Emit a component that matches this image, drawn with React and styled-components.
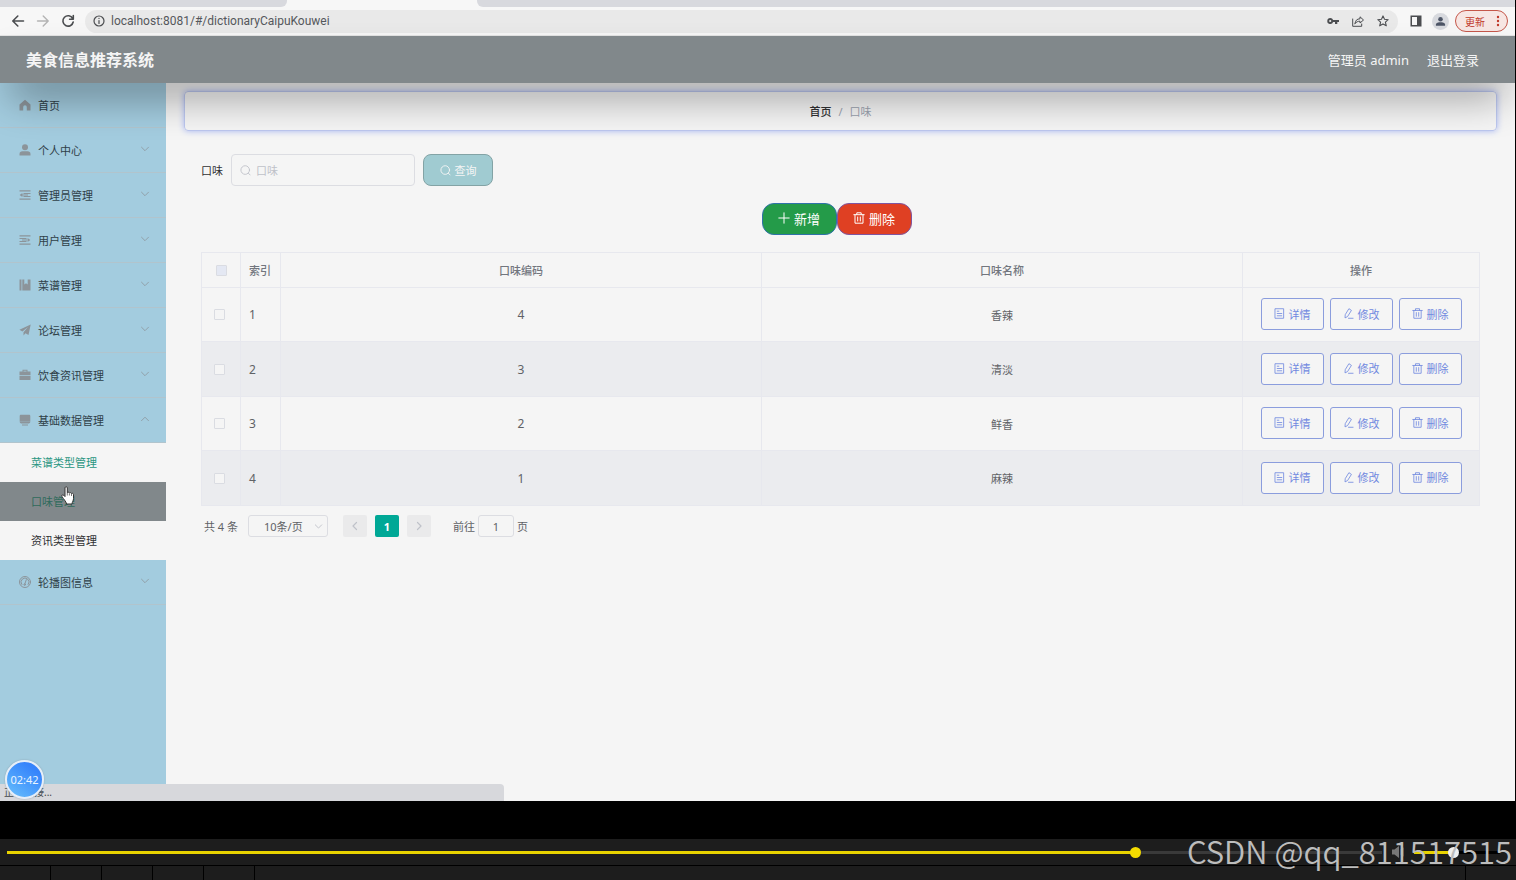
import React from 'react'
import styled, { createGlobalStyle, css } from 'styled-components'

const GlobalStyle = createGlobalStyle`
    * {
        box-sizing: border-box;
    }
    body {
        margin: 0;
        background: #000;
        font-family: 'Noto Sans', 'Noto Sans CJK SC', sans-serif;
        font-size: 11px;
        color: #606266;
    }
    button,
    input,
    select {
        font: inherit;
        color: inherit;
        margin: 0;
    }
    a {
        color: inherit;
        text-decoration: none;
    }
`

/* ---------- icons ---------- */

const Svg = styled.svg`
    display: block;
    flex: none;
    fill: ${({ $line }) => ($line ? 'none' : 'currentColor')};
    stroke: ${({ $line }) => ($line ? 'currentColor' : 'none')};
    stroke-width: ${({ $weight }) => $weight || 1};
    stroke-linecap: round;
    stroke-linejoin: round;
`

const SHAPES = {
    home: <path d="M6 .8 11.5 5.5V11.5H7.8V8a1.8 1.8 0 0 0-3.6 0v3.5H.5v-6z" />,
    user: (
        <>
            <circle cx="6" cy="3.2" r="3" />
            <path d="M.5 11.5V10c0-1.8 1.2-2.7 3-2.7h5c1.8 0 3 .9 3 2.7v1.5z" />
        </>
    ),
    fold: (
        <path d="M.5 1.3h11v1.2H.5zM.5 9.6h11v1.2H.5zM4.5 4.1h7v1h-7zM4.5 6.9h7v1h-7zM3.4 4v4L.6 6zM3 5.6h6v.8H3z" />
    ),
    unfold: (
        <path d="M.5 1.3h11v1.2H.5zM.5 9.6h11v1.2H.5zM.5 4.1h7v1h-7zM.5 6.9h7v1h-7zM8.6 4v4l2.8-2zM3 5.6h6v.8H3z" />
    ),
    book: <path d="M.5.5h2v11h-2zM3.3.5h2v5l1.7-1.2L8.7 5.5v-5h2.8v11H3.3z" />,
    plane: <path d="M11.7.5.4 5.8l3 1.7L9 3 4.5 8.2v3.3l2-2.2 3 1.6z" />,
    briefcase: (
        <path
            fillRule="evenodd"
            d="M3.5 2.5V.8h5v1.7h3v3.7H.5V2.5zM4.5 2.5h3v-.8h-3zM.5 7h11v4H.5z"
        />
    ),
    platform: (
        <path d="M2 .8h8c.8 0 1.3.5 1.3 1.3v5.6H.7V2.1C.7 1.3 1.2.8 2 .8zM.7 8.1h10.600c-.2.9-.7 1.300-1.500 1.300H2.200c-.8 0-1.300-.4-1.500-1.300zM3 10.500h6v.9H3z" />
    )
}

const LINES = {
    gauge: (
        <>
            <circle cx="6" cy="6" r="5.5" />
            <path d="M2.8 8.500a4 4 0 1 1 6.400 0M7.300 3.700 5.800 8" />
            <circle cx="5.7" cy="8.6" r=".8" />
        </>
    ),
    down: <path d="M2.5 4.2 6 7.7l3.5-3.500" />,
    up: <path d="M2.5 7.7 6 4.2l3.5 3.500" />,
    left: <path d="M7.5 2.5 4 6l3.500 3.500" />,
    right: <path d="M4.5 2.5 8 6l-3.500 3.500" />,
    search: (
        <>
            <circle cx="5.7" cy="5.5" r="4.7" />
            <path d="m9.2 9 1.9 1.9" />
        </>
    ),
    plus: <path d="M6 .8v10.400M.8 6h10.400" />,
    trash: (
        <path d="M.8 2.7h10.400M3.800 2.500V.8h4.400v1.700M2 2.900v8.300h8V2.900M4.700 5v4M7.300 5v4" />
    ),
    doc: <path d="M1.5.8h9v10.400h-9zM3.500 3.500h1.800M3.500 6h5M3.500 8.500h5" />,
    edit: <path d="M6.8 1 9.2 2.600 5 9.300 2.200 10.800 2.400 7.700zM6 11.200h5" />
}

const Icon = ({ name, size = 12, weight }) => (
    <Svg
        viewBox="0 0 12 12"
        width={size}
        height={size}
        $line={!!LINES[name]}
        $weight={weight}
        aria-hidden="true">
        {LINES[name] || SHAPES[name]}
    </Svg>
)

/* ---------- browser chrome ---------- */

const Screen = styled.div`
    display: flex;
    flex-direction: column;
    min-height: 100vh;
`

const Browser = styled.div`
    position: relative;
    flex: 1;
    display: flex;
    flex-direction: column;
    margin-right: 1px;
    background: #f5f5f5;
`

const TabStrip = styled.div`
    display: flex;
    height: 7px;
    background: #f7f7f7;
`

const TabRest = styled.div`
    background: #d8d9de;
    ${({ $first }) =>
        $first
            ? css`
                  width: 287px;
                  margin-right: 190px;
                  border-bottom-right-radius: 6px;
              `
            : css`
                  flex: 1;
                  border-bottom-left-radius: 6px;
              `}
`

const Toolbar = styled.div`
    display: flex;
    align-items: center;
    height: 29px;
    padding: 0 7px 0 5px;
    background: #f7f7f7;
    border-bottom: 1px solid #e4e4e4;
`

const IconButton = styled.button`
    display: flex;
    align-items: center;
    justify-content: center;
    padding: 0;
    border: 0;
    width: 25px;
    height: 22px;
    background: none;
    color: ${({ $dim }) => ($dim ? '#b4b4b4' : '#4b4d50')};
`

const AddressBar = styled.div`
    flex: 1;
    display: flex;
    align-items: center;
    height: 23px;
    margin: 0 5px;
    padding: 0 3px 0 8px;
    border-radius: 12px;
    background: #e9e9e9;
    color: #4b4d50;
`

const Url = styled.input`
    flex: 1;
    min-width: 0;
    padding: 0 0 0 6px;
    border: 0;
    outline: 0;
    background: none;
    font-family: Roboto, sans-serif;
    font-size: 12px;
    color: #55585c;
`

const Avatar = styled.span`
    display: flex;
    align-items: center;
    justify-content: center;
    width: 17px;
    height: 17px;
    border-radius: 50%;
    background: #d7d9de;
    color: #4d5566;
`

const Update = styled.button`
    display: flex;
    align-items: center;
    justify-content: space-between;
    width: 53px;
    height: 22px;
    margin-left: 2px;
    padding: 0 7px 0 9px;
    border: 1px solid #c5574a;
    border-radius: 11px;
    background: #f7e6e3;
    color: #c0392b;
    font-size: 10px;
`

/* ---------- app header ---------- */

const Header = styled.header`
    position: relative;
    z-index: 2;
    display: flex;
    align-items: center;
    justify-content: space-between;
    height: 47px;
    padding: 0 36px 0 26px;
    background: #81888b;
    color: #f5f5f5;
    box-shadow: 0 22px 40px -10px rgba(0, 0, 0, 0.45);
`

const Title = styled.h1`
    margin: 0;
    font-size: 16px;
    line-height: 24px;
    font-weight: 700;
`

const UserLinks = styled.nav`
    display: flex;
    gap: 18px;
    font-size: 13px;
`

/* ---------- sidebar ---------- */

const Body = styled.div`
    flex: 1;
    display: flex;
`

const Sidebar = styled.nav`
    width: 166px;
    background: #a3ccdf;
`

const MenuItem = styled.a`
    display: flex;
    align-items: center;
    gap: 7px;
    height: 45px;
    padding: 0 15px 0 19px;
    border-bottom: 1px solid #b1c4cd;
    color: #2f4048;
    > svg {
        color: #8c949a;
    }
    > svg:last-child:not(:first-child) {
        margin-left: auto;
        margin-bottom: 3px;
    }
`

const SubMenu = styled.div`
    background: #f5f5f5;
`

const SubItem = styled.a`
    display: flex;
    align-items: center;
    height: 39px;
    padding: 0 0 2px 31px;
    background: ${({ $active }) => ($active ? '#81888b' : 'none')};
    color: ${({ $color }) => $color};
`

/* ---------- main ---------- */

const Main = styled.main`
    flex: 1;
    min-width: 0;
    padding: 8px 18px;
`

const Breadcrumb = styled.div`
    display: flex;
    align-items: center;
    justify-content: center;
    gap: 7px;
    height: 40px;
    border: 1px solid #bcc7ef;
    border-radius: 4px;
    box-shadow: 0 0 6px #a9b8f5;
    color: #9ca3b0;
    a {
        color: #303133;
        font-weight: 500;
    }
`

const Content = styled.div`
    padding: 23px 17px 0;
`

const SearchForm = styled.form`
    display: flex;
    align-items: center;
    gap: 8px;
    label {
        color: #303133;
    }
`

const SearchBox = styled.div`
    display: flex;
    align-items: center;
    gap: 5px;
    width: 184px;
    height: 32px;
    padding: 0 8px;
    border: 1px solid #dcdde2;
    border-radius: 4px;
    color: #bfc2c9;
    input {
        flex: 1;
        min-width: 0;
        padding: 0;
        border: 0;
        outline: 0;
        background: none;
    }
    input::placeholder {
        color: #bfc2c9;
    }
`

const QueryButton = styled.button`
    display: flex;
    align-items: center;
    justify-content: center;
    gap: 4px;
    width: 70px;
    height: 32px;
    padding: 0;
    border: 1px solid #83a3a5;
    border-radius: 8px;
    background: #a0cbd1;
    color: #f5f5f5;
`

const Actions = styled.div`
    display: flex;
    justify-content: center;
    margin: 17px 8px 17px 0;
`

const RoundButton = styled.button`
    display: flex;
    align-items: center;
    justify-content: center;
    gap: 4px;
    width: 75px;
    height: 32px;
    padding: 0 0 2px;
    border: 1px solid ${({ $edge }) => $edge};
    border-radius: 12px;
    background: ${({ $bg }) => $bg};
    color: #fff;
    font-size: 13px;
`

const Table = styled.table`
    width: 100%;
    table-layout: fixed;
    border-collapse: collapse;
    border: 1px solid #e7e8ee;
    th,
    td {
        padding: 0;
        border: 1px solid #e7e8ee;
        text-align: center;
    }
    th {
        height: 35px;
        color: #72767e;
        font-weight: 500;
    }
    td {
        height: 54px;
    }
    tbody tr:nth-child(even) td {
        height: 55px;
        background: #ebecef;
    }
    td:first-child {
        padding-right: 4px;
    }
    th:nth-child(2),
    td:nth-child(2) {
        padding-left: 8px;
        text-align: left;
    }
    td:nth-child(2) {
        font-size: 12px;
    }
`

const Num = styled.span`
    font-size: 12px;
`

const Checkbox = styled.input.attrs({ type: 'checkbox' })`
    appearance: none;
    display: block;
    width: 11px;
    height: 11px;
    margin: 0 auto;
    border: 1px solid #dadce2;
    border-radius: 1px;
    background: ${({ $all }) => ($all ? '#e4e8f3' : '#f5f5f5')};
`

const RowActions = styled.div`
    display: flex;
    justify-content: center;
    gap: 6px;
    padding-bottom: 1px;
`

const RowButton = styled.button`
    display: flex;
    align-items: center;
    justify-content: center;
    gap: 4px;
    width: 63px;
    height: 32px;
    padding: 0 0 1px;
    border: 1px solid #8b9ddd;
    border-radius: 3px;
    background: #f5f5f5;
    color: #7189e0;
`

const Pagination = styled.div`
    display: flex;
    align-items: center;
    margin-top: 9px;
    padding-left: 3px;
`

const SizeSelect = styled.div`
    position: relative;
    margin: 0 15px 0 10px;
    select {
        appearance: none;
        display: block;
        width: 80px;
        height: 22px;
        padding: 0 0 0 15px;
        border: 1px solid #dcdde2;
        border-radius: 3px;
        background: none;
    }
    svg {
        position: absolute;
        right: 4px;
        top: 6px;
        color: #bfc2c9;
    }
`

const PageButton = styled.button`
    display: flex;
    align-items: center;
    justify-content: center;
    width: 24px;
    height: 22px;
    margin-right: 8px;
    padding: 0;
    border: 0;
    border-radius: 2px;
    background: ${({ $current }) => ($current ? '#00a896' : '#eaeaeb')};
    color: ${({ $current }) => ($current ? '#fff' : '#bfc2c9')};
    font-weight: 700;
`

const Jump = styled.label`
    display: flex;
    align-items: center;
    gap: 3px;
    margin-left: 14px;
    input {
        width: 36px;
        height: 22px;
        padding: 0;
        border: 1px solid #dcdde2;
        border-radius: 3px;
        background: none;
        text-align: center;
    }
`

/* ---------- overlays ---------- */

const StatusBar = styled.div`
    position: absolute;
    z-index: 3;
    left: 0;
    bottom: 0;
    width: 504px;
    height: 17px;
    padding-left: 4px;
    border-top-right-radius: 4px;
    background: #d7d8dc;
    font-size: 10px;
    line-height: 17px;
    color: #44474b;
`

const Timer = styled.div`
    position: absolute;
    z-index: 4;
    left: 5px;
    bottom: 2px;
    display: flex;
    align-items: center;
    justify-content: center;
    width: 39px;
    height: 39px;
    border: 2px solid #e6eef8;
    border-radius: 50%;
    background: linear-gradient(215deg, #3583fb 20%, #4a9dfc 55%, #68c0fb);
    color: #e9f4ff;
    box-shadow: 0 0 2px #8fa3b0;
`

const Cursor = styled.svg`
    position: absolute;
    z-index: 4;
    left: 61px;
    top: 486px;
`

/* ---------- player ---------- */

const Player = styled.div`
    position: relative;
    margin-top: 38px;
    height: 41px;
    background: #1d1d1d;
`

const Controls = styled.div`
    display: flex;
    align-items: center;
    gap: 9px;
    height: 27px;
    padding: 0 16px 0 7px;
    border-bottom: 1px solid #000;
    color: #777;
`

const Slider = styled.input.attrs({ type: 'range', min: 0, max: 100, step: 'any' })`
    appearance: none;
    ${({ $grow }) => ($grow ? 'flex: 1;' : 'width: 86px;')}
    min-width: 0;
    height: 11px;
    background: linear-gradient(
            to right,
            #e8d200 ${({ $fill }) => $fill}%,
            ${({ $rest }) => $rest} ${({ $fill }) => $fill}%
        )
        center / 100% 3px no-repeat;
    &::-webkit-slider-thumb {
        appearance: none;
        width: 11px;
        height: 11px;
        border-radius: 50%;
        background: ${({ $knob }) => $knob};
    }
`

const Slots = styled.div`
    display: flex;
    height: 14px;
    span {
        width: 51px;
        border-right: 1px solid #000;
    }
    span:last-child {
        margin-left: auto;
        border-right: 0;
        border-left: 1px solid #000;
    }
`

const Watermark = styled.div`
    position: absolute;
    right: 4px;
    top: -10px;
    font-family: 'Noto Sans CJK SC', sans-serif;
    font-size: 31px;
    font-weight: 350;
    line-height: 44px;
    color: #bdbdbd;
    pointer-events: none;
`

const MENU = [
    { icon: 'home', text: '首页' },
    { icon: 'user', text: '个人中心', arrow: 'down' },
    { icon: 'fold', text: '管理员管理', arrow: 'down' },
    { icon: 'unfold', text: '用户管理', arrow: 'down' },
    { icon: 'book', text: '菜谱管理', arrow: 'down' },
    { icon: 'plane', text: '论坛管理', arrow: 'down' },
    { icon: 'briefcase', text: '饮食资讯管理', arrow: 'down' },
    {
        icon: 'platform',
        text: '基础数据管理',
        arrow: 'up',
        children: [
            { text: '菜谱类型管理', color: '#299582' },
            { text: '口味管理', color: '#2f6b5c', active: true },
            { text: '资讯类型管理', color: '#303133' }
        ]
    },
    { icon: 'gauge', text: '轮播图信息', arrow: 'down' }
]

const ROWS = [
    { code: 4, name: '香辣' },
    { code: 3, name: '清淡' },
    { code: 2, name: '鲜香' },
    { code: 1, name: '麻辣' }
]

const ROW_ACTIONS = [
    { icon: 'doc', text: '详情' },
    { icon: 'edit', text: '修改' },
    { icon: 'trash', text: '删除' }
]

const Chrome = () => (
    <>
        <TabStrip>
            <TabRest $first />
            <TabRest />
        </TabStrip>
        <Toolbar>
            <IconButton aria-label="后退">
                <Svg viewBox="0 0 14 14" width="14" height="14" $line $weight={1.6}>
                    <path d="M12.5 7H2M6.8 2 1.8 7l5 5" />
                </Svg>
            </IconButton>
            <IconButton aria-label="前进" $dim>
                <Svg viewBox="0 0 14 14" width="14" height="14" $line $weight={1.4}>
                    <path d="M1.5 7H12M7.2 2l5 5-5 5" />
                </Svg>
            </IconButton>
            <IconButton aria-label="刷新">
                <Svg viewBox="0 0 14 14" width="14" height="14" $line $weight={1.6}>
                    <path d="M11.7 4.500A5.200 5.200 0 1 0 12.200 8M12.300 1.500v3.700H8.600" />
                </Svg>
            </IconButton>
            <AddressBar>
                <Svg viewBox="0 0 12 12" width="12" height="12" $line $weight={1.2}>
                    <circle cx="6" cy="6" r="5" />
                    <path d="M6 5.500v3M6 3.300v.2" />
                </Svg>
                <Url
                    aria-label="地址"
                    defaultValue="localhost:8081/#/dictionaryCaipuKouwei"
                />
                <IconButton aria-label="密码">
                    <Svg viewBox="0 0 12 12" width="12" height="12">
                        <path
                            fillRule="evenodd"
                            d="M3.200 3a3 3 0 1 0 2.900 4H8v2h2.300V7H12V5H6.100A3 3 0 0 0 3.200 3zm0 1.900a1.100 1.100 0 1 1 0 2.200 1.100 1.100 0 0 1 0-2.200z"
                        />
                    </Svg>
                </IconButton>
                <IconButton aria-label="分享">
                    <Svg viewBox="0 0 12 12" width="12" height="12" $line>
                        <path d="M.7 4v7.300h9V9M3 8.500c.3-3 2-4.700 5-4.700v-2L11.500 5 8 8V6.200C5.800 6.200 4.300 7 3 8.500z" />
                    </Svg>
                </IconButton>
                <IconButton aria-label="收藏">
                    <Svg viewBox="0 0 12 12" width="12" height="12" $line $weight={1.1}>
                        <path d="m6 .9 1.500 3.400 3.700.4-2.800 2.400.9 3.700L6 8.900l-3.300 1.900.9-3.700L.8 4.700l3.700-.4z" />
                    </Svg>
                </IconButton>
            </AddressBar>
            <IconButton aria-label="侧边栏">
                <Svg viewBox="0 0 12 12" width="12" height="12">
                    <path fillRule="evenodd" d="M.5.5h11v11H.5zM2 2v8h5V2z" />
                </Svg>
            </IconButton>
            <IconButton aria-label="个人资料">
                <Avatar>
                    <Svg viewBox="0 0 12 12" width="11" height="11">
                        <circle cx="6" cy="3.5" r="2.5" />
                        <path d="M1 10.500V9.300C1 7.500 4 6.900 6 6.900s5 .6 5 2.400v1.200z" />
                    </Svg>
                </Avatar>
            </IconButton>
            <Update>
                更新
                <Svg viewBox="0 0 4 12" width="4" height="12">
                    <circle cx="2" cy="2" r="1.2" />
                    <circle cx="2" cy="6" r="1.2" />
                    <circle cx="2" cy="10" r="1.2" />
                </Svg>
            </Update>
        </Toolbar>
    </>
)

const Menu = () => (
    <Sidebar>
        {MENU.map(({ icon, text, arrow, children }) => (
            <React.Fragment key={text}>
                <MenuItem href="#">
                    <Icon name={icon} />
                    {text}
                    {arrow && <Icon name={arrow} weight={0.8} />}
                </MenuItem>
                {children && (
                    <SubMenu>
                        {children.map((item) => (
                            <SubItem
                                href="#"
                                key={item.text}
                                $color={item.color}
                                $active={item.active}>
                                {item.text}
                            </SubItem>
                        ))}
                    </SubMenu>
                )}
            </React.Fragment>
        ))}
    </Sidebar>
)

const FlavorTable = () => (
    <Table>
        <colgroup>
            <col width="39" />
            <col width="40" />
            <col />
            <col />
            <col width="237" />
        </colgroup>
        <thead>
            <tr>
                <th>
                    <Checkbox $all aria-label="全选" />
                </th>
                <th>索引</th>
                <th>口味编码</th>
                <th>口味名称</th>
                <th>操作</th>
            </tr>
        </thead>
        <tbody>
            {ROWS.map(({ code, name }, i) => (
                <tr key={code}>
                    <td>
                        <Checkbox aria-label={name} />
                    </td>
                    <td>{i + 1}</td>
                    <td>
                        <Num>{code}</Num>
                    </td>
                    <td>{name}</td>
                    <td>
                        <RowActions>
                            {ROW_ACTIONS.map(({ icon, text }) => (
                                <RowButton key={text}>
                                    <Icon name={icon} size={11} weight={0.9} />
                                    {text}
                                </RowButton>
                            ))}
                        </RowActions>
                    </td>
                </tr>
            ))}
        </tbody>
    </Table>
)

const Pager = () => (
    <Pagination>
        <span>共 4 条</span>
        <SizeSelect>
            <select aria-label="每页条数">
                <option>10条/页</option>
            </select>
            <Icon name="down" size={11} />
        </SizeSelect>
        <PageButton aria-label="上一页">
            <Icon name="left" weight={1.2} />
        </PageButton>
        <PageButton $current>1</PageButton>
        <PageButton aria-label="下一页">
            <Icon name="right" weight={1.2} />
        </PageButton>
        <Jump>
            前往
            <input defaultValue="1" />
            页
        </Jump>
    </Pagination>
)

const App = () => (
    <Screen>
        <GlobalStyle />
        <Browser>
            <Chrome />
            <Header>
                <Title>美食信息推荐系统</Title>
                <UserLinks>
                    <a href="#">管理员 admin</a>
                    <a href="#">退出登录</a>
                </UserLinks>
            </Header>
            <Body>
                <Menu />
                <Main>
                    <Breadcrumb>
                        <a href="#">首页</a>
                        <span>/</span>
                        <span>口味</span>
                    </Breadcrumb>
                    <Content>
                        <SearchForm onSubmit={(e) => e.preventDefault()}>
                            <label htmlFor="flavor">口味</label>
                            <SearchBox>
                                <Icon name="search" size={11} />
                                <input id="flavor" placeholder="口味" />
                            </SearchBox>
                            <QueryButton>
                                <Icon name="search" size={11} />
                                查询
                            </QueryButton>
                        </SearchForm>
                        <Actions>
                            <RoundButton $bg="#249b49" $edge="#2f72a8">
                                <Icon name="plus" />
                                新增
                            </RoundButton>
                            <RoundButton $bg="#df4023" $edge="#7e55a0">
                                <Icon name="trash" />
                                删除
                            </RoundButton>
                        </Actions>
                        <FlavorTable />
                        <Pager />
                    </Content>
                </Main>
            </Body>
            <StatusBar>正在连接...</StatusBar>
            <Timer>02:42</Timer>
            <Cursor viewBox="0 0 14 19" width="14" height="19" aria-hidden="true">
                <path
                    d="M4 1.800C4 .4 6.300.4 6.300 1.800v5c.3-1 2-.8 2.100.3.500-.8 1.900-.6 2.100.5.600-.6 2-.3 2 1v4c0 2.200-1.300 3-1.500 5.400H5.600C5.200 15.500 2.600 13.300 1 10.500c-.8-1.400.9-2.200 1.800-1.100L4 10.600z"
                    fill="#fff"
                    stroke="#333"
                    strokeWidth="1"
                />
                <path d="M6.300 7v2.500M8.400 7.500v2M10.500 8v2" stroke="#555" strokeWidth=".8" />
            </Cursor>
        </Browser>
        <Player>
            <Controls>
                <Slider
                    aria-label="播放进度"
                    defaultValue={82.3}
                    $grow
                    $fill={82}
                    $rest="#3a3a3a"
                    $knob="#f5dc00"
                />
                <Svg viewBox="0 0 14 14" width="14" height="14">
                    <path d="M1 4.500h2.500L8 1v12L3.500 9.500H1z" />
                    <path d="M10 4.500v5M12.300 3v8" stroke="#555" fill="none" />
                </Svg>
                <Slider
                    aria-label="音量"
                    defaultValue={45}
                    $fill={45}
                    $rest="#000"
                    $knob="#f0f0f0"
                />
            </Controls>
            <Slots>
                <span />
                <span />
                <span />
                <span />
                <span />
                <span />
            </Slots>
            <Watermark>CSDN @qq_811517515</Watermark>
        </Player>
    </Screen>
)

export default App
